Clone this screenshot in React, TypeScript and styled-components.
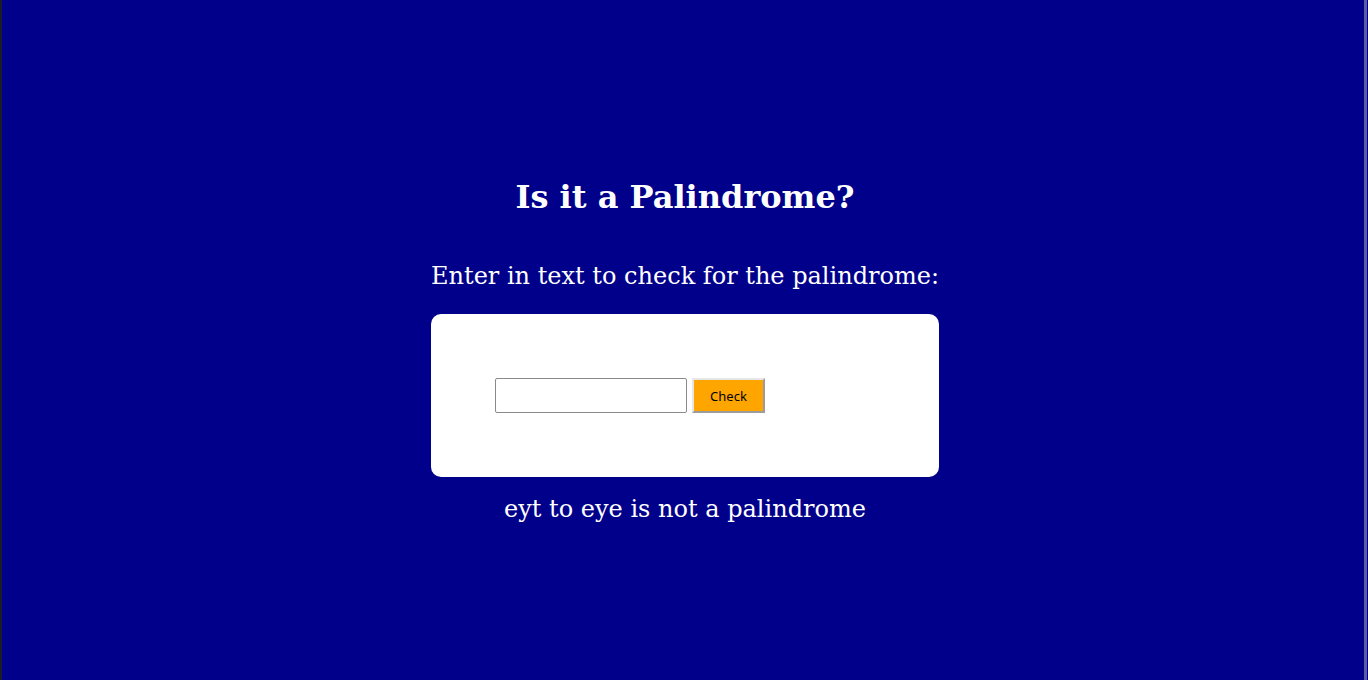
import React, { useState } from "react";
import styled, { createGlobalStyle } from "styled-components";

const GlobalStyle = createGlobalStyle`
  html, body {
    margin: 0;
    padding: 0;
    background-color: #00008b;
  }
  body {
    font-family: "DejaVu Serif", serif;
    color: #ffffff;
  }
`;

const Page = styled.main`
  min-height: 680px;
  box-sizing: border-box;
  padding-top: 179px;
  display: flex;
  flex-direction: column;
  align-items: center;
  border-left: 2px solid #1c1c28;
  box-shadow: inset -1px 0 0 #00008b, inset -4px 0 0 #5a5aa6;
`;

const Title = styled.h1`
  margin: 0 0 46px;
  font-size: 32px;
  font-weight: bold;
  line-height: 37px;
`;

const Prompt = styled.p`
  margin: 0 0 24px;
  font-size: 24px;
  line-height: 28px;
`;

const Card = styled.form`
  width: 508px;
  height: 163px;
  box-sizing: border-box;
  padding: 64px;
  background: #ffffff;
  border-radius: 10px;
  display: flex;
  align-items: flex-start;
  gap: 5px;
`;

const TextInput = styled.input`
  width: 192px;
  height: 35px;
  box-sizing: border-box;
  border: 1px solid #8a8a8a;
  border-radius: 2px;
  padding: 4px 8px;
  font-family: "Noto Sans", sans-serif;
  font-size: 14px;
`;

const CheckButton = styled.button`
  width: 73px;
  height: 35px;
  box-sizing: border-box;
  background-color: #ffa500;
  border: 2px solid;
  border-color: #e6e6e6 #9c9c9c #9c9c9c #e6e6e6;
  color: #000000;
  font-family: "Noto Sans", sans-serif;
  font-size: 13px;
  cursor: pointer;
`;

const Result = styled.p`
  margin: 18px 0 0;
  font-size: 24px;
  line-height: 28px;
`;

export default function App() {
  const [text, setText] = useState("");
  const [result, setResult] = useState("eyt to eye is not a palindrome");

  const check = (e: React.FormEvent) => {
    e.preventDefault();
    const clean = text.toLowerCase().replace(/[^a-z0-9]/g, "");
    const reversed = clean.split("").reverse().join("");
    setResult(
      clean === reversed
        ? `${text} is a palindrome`
        : `${text} to ${reversed} is not a palindrome`
    );
  };

  return (
    <>
      <GlobalStyle />
      <Page>
        <Title>Is it a Palindrome?</Title>
        <Prompt>Enter in text to check for the palindrome:</Prompt>
        <Card onSubmit={check}>
          <TextInput value={text} onChange={(e) => setText(e.target.value)} />
          <CheckButton type="submit">Check</CheckButton>
        </Card>
        <Result>{result}</Result>
      </Page>
    </>
  );
}
